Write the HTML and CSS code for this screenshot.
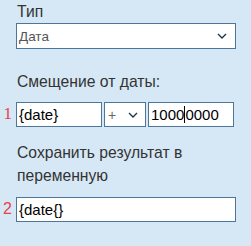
FILE: index.html
```html
<!DOCTYPE html>
<html lang="ru">
<head>
  <meta charset="UTF-8">
  <title>Смещение даты</title>
  <link rel="stylesheet" href="styles.css">
</head>
<body>
  <div class="panel">
    <div class="label first">Тип</div>
    <div class="select wide">
      <span class="select-text">Дата</span>
      <svg class="chev" width="10" height="6" viewBox="0 0 10 6"><path d="M1 1 L5 5 L9 1" fill="none" stroke="#1d2f4a" stroke-width="1.3"/></svg>
    </div>

    <div class="label gap">Смещение от даты:</div>
    <div class="row">
      <span class="num serif">1</span>
      <div class="input short">{date}</div>
      <div class="select small">
        <span class="plus">+</span>
        <svg class="chev" width="10" height="6" viewBox="0 0 10 6"><path d="M1 1 L5 5 L9 1" fill="none" stroke="#1d2f4a" stroke-width="1.3"/></svg>
      </div>
      <div class="input short">1000<span class="caret"></span>0000</div>
    </div>

    <div class="label gap2">Сохранить результат в переменную</div>
    <div class="row row2">
      <span class="num">2</span>
      <div class="input long">{date{}</div>
    </div>
  </div>
</body>
</html>
```

FILE: styles.css
```css
body {
  margin: 0;
  background: #d6e8f5;
  font-family: "Liberation Sans", Arial, sans-serif;
  color: #333;
}

.panel {
  padding: 0 0 0 16px;
  width: 222px;
  position: relative;
}

.label {
  font-size: 15.7px;
  line-height: 23px;
  padding-left: 1px;
}

.gap {
  margin-top: 21px;
  margin-bottom: 9px;
}

.gap2 {
  margin-top: 14px;
  margin-bottom: 10px;
}

.select,
.input {
  box-sizing: border-box;
  background: #fff;
  border: 1px solid #4d769b;
  display: flex;
  align-items: center;
}

.wide {
  width: 220px;
  height: 26px;
  padding: 0 8px 0 2px;
  justify-content: space-between;
}

.select-text {
  font-size: 13.5px;
  color: #555;
}

.chev {
  display: block;
}

.row {
  display: flex;
  gap: 2px;
  position: relative;
}

.num {
  position: absolute;
  right: 100%;
  margin-right: 4px;
  top: 3px;
  color: #e8414f;
  font-size: 16px;
  line-height: 18px;
}

.serif {
  font-family: "Liberation Serif", "Times New Roman", serif;
  font-size: 17px;
}

.input {
  height: 25px;
  padding-left: 2px;
  font-size: 15px;
  color: #000;
}

.short {
  width: 86px;
}

.small {
  width: 42px;
  height: 25px;
  padding: 0 7px 0 3px;
  justify-content: space-between;
}

.plus {
  font-size: 14px;
  color: #666;
}

.long {
  width: 220px;
}

.caret {
  display: inline-block;
  width: 1px;
  height: 17px;
  background: #000;
}
```
